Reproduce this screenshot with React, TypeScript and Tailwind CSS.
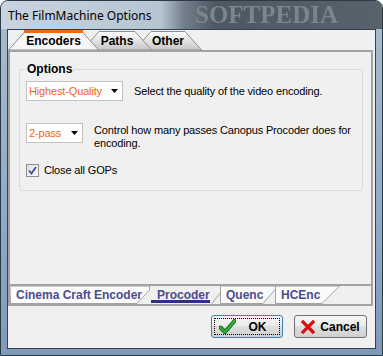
import React from "react";

const sans = "font-['Liberation_Sans',Arial,sans-serif]";

function CheckIcon() {
  return (
    <svg width="17" height="15" viewBox="0 0 17 15">
      <path d="M1.5 8.5 L6 13 L15.5 2" fill="none" stroke="#14641a" strokeWidth="4" strokeLinecap="round" strokeLinejoin="round" />
      <path d="M1.5 8.5 L6 13 L15.5 2" fill="none" stroke="#2fb236" strokeWidth="2.2" strokeLinecap="round" strokeLinejoin="round" />
    </svg>
  );
}

function CrossIcon() {
  return (
    <svg width="14" height="14" viewBox="0 0 14 14">
      <path d="M2 2 L12 12 M12 2 L2 12" stroke="#d80f0f" strokeWidth="3.2" strokeLinecap="square" />
    </svg>
  );
}

function Arrow() {
  return (
    <svg width="7" height="4" viewBox="0 0 7 4">
      <polygon points="0,0 7,0 3.5,4" fill="#000" />
    </svg>
  );
}

export default function App() {
  return (
    <div className={`w-[383px] h-[356px] flex flex-col rounded-t-[8px] border border-[#2c3a48] overflow-hidden bg-[linear-gradient(to_bottom,#a9bccd,#8fabc6_60%,#7d9ab6)] ${sans}`}>
      {/* title bar */}
      <div className="relative h-[28px] flex items-center px-[7px] bg-[linear-gradient(to_right,#c8d4df_0%,#b6c5d3_42%,#737f8b_48%,#4d5863_56%,#57626d_100%)] overflow-hidden">
        <span className="text-[12px] text-black font-['Noto_Sans',sans-serif] pt-[1px]">The FilmMachine Options</span>
        <span className="absolute left-[194px] top-[1px] text-[25px] leading-[26px] font-bold text-[#7c858e] blur-[0.7px] font-['Liberation_Serif',serif]">SOFTPEDIA</span>
      </div>

      {/* client area */}
      <div className="mx-[6px] h-[320px] border border-[#34404c] bg-[#f0f0f0] flex flex-col">
        {/* top tab strip */}
        <div className="h-[20px] flex items-end">
          <div className="relative z-30 w-[91px] h-[20px] flex items-center justify-center">
            <svg className="absolute inset-0" width="91" height="20">
              <polygon points="0.5,20 17,1.5 74,1.5 90.5,20" fill="#f7f7f7" stroke="#8d8d8d" />
              <rect x="16" y="0" width="59" height="3" fill="#f2680f" />
            </svg>
            <span className="relative text-[12px] font-bold text-black pt-[1px]">Encoders</span>
          </div>
          <div className="relative z-20 -ml-[17px] w-[70px] h-[20px] flex items-center justify-center">
            <svg className="absolute inset-0" width="70" height="20">
              <defs>
                <linearGradient id="tabg1" x1="0" y1="0" x2="0" y2="1">
                  <stop offset="0" stopColor="#ffffff" />
                  <stop offset="1" stopColor="#c6c6c6" />
                </linearGradient>
              </defs>
              <polygon points="0.5,20 17,1.5 53,1.5 69.5,20" fill="url(#tabg1)" stroke="#8d8d8d" />
            </svg>
            <span className="relative text-[12px] font-bold text-black pt-[2px]">Paths</span>
          </div>
          <div className="relative z-10 -ml-[18px] w-[68px] h-[20px] flex items-center justify-center">
            <svg className="absolute inset-0" width="68" height="20">
              <defs>
                <linearGradient id="tabg2" x1="0" y1="0" x2="0" y2="1">
                  <stop offset="0" stopColor="#ffffff" />
                  <stop offset="1" stopColor="#c6c6c6" />
                </linearGradient>
              </defs>
              <polygon points="0.5,20 17,1.5 51,1.5 67.5,20" fill="url(#tabg2)" stroke="#8d8d8d" />
            </svg>
            <span className="relative text-[12px] font-bold text-black pt-[2px]">Other</span>
          </div>
        </div>

        {/* tab panel */}
        <div className="w-[365px] h-[256px] border-2 border-[#a3a3a3] flex flex-col">
          {/* encoders page */}
          <div className="h-[234px] border-b-2 border-[#a3a3a3] pt-[10px] pl-[9px] pr-[8px]">
            <fieldset className="border border-[#d5dde4] rounded-[3px] px-[6px] pb-[11px]">
              <legend className="text-[12px] leading-[14px] font-bold text-black px-[1px]">Options</legend>
              <div className="flex flex-col pt-[5px]">
                <div className="flex items-center">
                  <div className="w-[97px] h-[20px] bg-white border border-[#c3c3c3] flex items-center justify-between pl-[2px] pr-[4px]">
                    <span className="text-[11px] tracking-[-0.15px] text-[#f0641a]">Highest-Quality</span>
                    <Arrow />
                  </div>
                  <span className="ml-[11px] text-[11px] tracking-[-0.15px] text-black whitespace-nowrap">Select the quality of the video encoding.</span>
                </div>
                <div className="flex items-start mt-[22px]">
                  <div className="shrink-0 w-[57px] h-[20px] bg-white border border-[#c3c3c3] flex items-center justify-between pl-[2px] pr-[4px]">
                    <span className="text-[11px] tracking-[-0.15px] text-[#f0641a]">2-pass</span>
                    <Arrow />
                  </div>
                  <span className="ml-[11px] text-[11px] tracking-[-0.15px] leading-[13px] text-black pt-[1px] whitespace-nowrap">
                    Control how many passes Canopus Procoder does for
                    <br />
                    encoding.
                  </span>
                </div>
                <div className="flex items-center mt-[12px]">
                  <div className="w-[13px] h-[13px] border border-[#8e8f8f] bg-[linear-gradient(135deg,#dedede,#fbfbfb)] flex items-center justify-center">
                    <svg width="9" height="9" viewBox="0 0 9 9">
                      <path d="M1 4.5 L3.5 7.5 L8 1" fill="none" stroke="#3a4ea6" strokeWidth="1.8" />
                    </svg>
                  </div>
                  <span className="ml-[5px] text-[11px] tracking-[-0.15px] text-black">Close all GOPs</span>
                </div>
              </div>
            </fieldset>
          </div>

          {/* bottom tab row */}
          <div className="h-[18px] flex items-start">
            <div className="relative w-[140px] h-[18px] flex items-center pl-[6px]">
              <svg className="absolute inset-0" width="140" height="18">
                <polygon points="0,0 139.5,0 139.5,4 127,17.5 0.5,17.5" fill="#fbfbfb" stroke="#a3a3a3" />
              </svg>
              <span className="relative text-[12px] font-bold text-[#4c4c8c]">Cinema Craft Encoder</span>
            </div>
            <div className="relative w-[76px] h-[18px] flex items-center pl-[7px]">
              <svg className="absolute inset-0" width="76" height="18">
                <polygon points="0,0 75.5,0 62,17.5 0,17.5" fill="#f0f0f0" />
                <line x1="75.5" y1="0" x2="62" y2="17.5" stroke="#a3a3a3" />
                <rect x="1" y="14" width="59" height="3" fill="#2f2f86" />
              </svg>
              <span className="relative text-[12px] font-bold text-[#4c4c8c]">Procoder</span>
            </div>
            <div className="relative -ml-[6px] w-[56px] h-[18px] flex items-center pl-[6px]">
              <svg className="absolute inset-0" width="56" height="18">
                <polygon points="0.5,0 55.5,0 55.5,3 43,17.5 0.5,17.5" fill="#fbfbfb" stroke="#a3a3a3" />
              </svg>
              <span className="relative text-[12px] font-bold text-[#4c4c8c]">Quenc</span>
            </div>
            <div className="relative -ml-[1px] w-[65px] h-[18px] flex items-center pl-[6px]">
              <svg className="absolute inset-0" width="65" height="18">
                <polygon points="0.5,0 64.5,0 47,17.5 0.5,17.5" fill="#fbfbfb" stroke="#a3a3a3" />
              </svg>
              <span className="relative text-[12px] font-bold text-[#4c4c8c]">HCEnc</span>
            </div>
          </div>
        </div>

        {/* buttons */}
        <div className="flex justify-end gap-[11px] pt-[9px] pr-[8px]">
          <button className="w-[72px] h-[23px] rounded-[3px] border border-[#3c7fb1] bg-[linear-gradient(to_bottom,#f4f4f4,#ebebeb_50%,#dedede_50%,#d0d0d0)] p-[2px]">
            <div className="w-full h-full border border-dotted border-black flex items-center pl-[4px]">
              <CheckIcon />
              <span className="flex-1 text-center text-[12px] font-bold text-black">OK</span>
            </div>
          </button>
          <button className="w-[73px] h-[23px] rounded-[3px] border border-[#707070] bg-[linear-gradient(to_bottom,#f4f4f4,#ebebeb_50%,#dedede_50%,#d0d0d0)] flex items-center pl-[6px]">
            <CrossIcon />
            <span className="flex-1 text-center text-[12px] font-bold text-black pr-[1px]">Cancel</span>
          </button>
        </div>
      </div>
    </div>
  );
}
